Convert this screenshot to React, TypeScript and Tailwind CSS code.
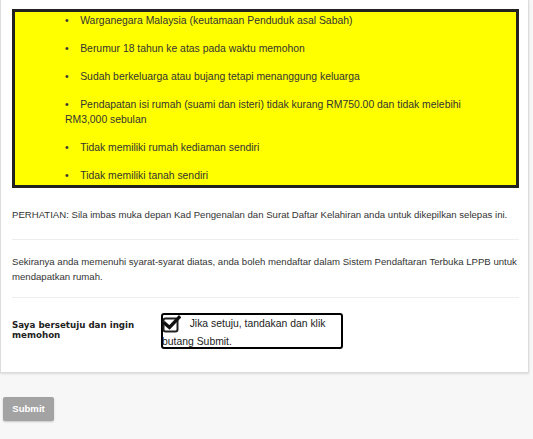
const syarat = [
  "Warganegara Malaysia (keutamaan Penduduk asal Sabah)",
  "Berumur 18 tahun ke atas pada waktu memohon",
  "Sudah berkeluarga atau bujang tetapi menanggung keluarga",
  "Pendapatan isi rumah (suami dan isteri) tidak kurang RM750.00 dan tidak melebihi",
  "Tidak memiliki rumah kediaman sendiri",
  "Tidak memiliki tanah sendiri",
];

const CheckIcon = () => (
  <svg width="19" height="18" viewBox="0 0 19 18" className="inline-block align-top">
    <rect x="1.5" y="3.5" width="14" height="13" rx="2" fill="none" stroke="#222" strokeWidth="2" />
    <path d="M3 8.5 L7.5 12.5 L17 2.5" fill="none" stroke="#111" strokeWidth="3.4" strokeLinecap="square" />
  </svg>
);

export default function App() {
  return (
    <div className="w-[533px] h-[439px] overflow-hidden bg-[#f7f7f7] text-[9.6px] text-[#333] [font-family:'Liberation_Sans',Arial,sans-serif]">
      <div className="w-[529px] bg-white border-x border-b border-[#dcdcdc] shadow-[0_1px_2px_rgba(0,0,0,0.12)] pt-[9px] pl-[11px] pr-[9px] pb-[23px]">
        {/* syarat box */}
        <div className="border-[3px] border-[#222] bg-[#ffff00] pl-[50px] pr-[8px] pt-[1px] pb-[2px] flex flex-col gap-[13px] text-[10.4px] leading-[15px]">
          {syarat.map((s, i) => (
            <p key={i}>
              •&nbsp;&nbsp;&nbsp;&nbsp;{s}
              {i === 3 && (
                <>
                  <br />
                  RM3,000 sebulan
                </>
              )}
            </p>
          ))}
        </div>

        <p className="mt-[19px] leading-[15px]">
          PERHATIAN: Sila imbas muka depan Kad Pengenalan dan Surat Daftar Kelahiran anda untuk dikepilkan selepas ini.
        </p>
        <hr className="mt-[17px] border-0 border-t border-[#eeeeee]" />

        <p className="mt-[14px] leading-[15px]">
          Sekiranya anda memenuhi syarat-syarat diatas, anda boleh mendaftar dalam Sistem Pendaftaran Terbuka LPPB untuk
          <br />
          mendapatkan rumah.
        </p>
        <hr className="mt-[13px] border-0 border-t border-[#eeeeee]" />

        <div className="mt-[15px] flex items-start">
          <div className="w-[149px] pt-[7px] font-bold text-[8.7px] leading-[10px] text-[#222] [font-family:'DejaVu_Sans',Verdana,sans-serif]">
            Saya bersetuju dan ingin
            <br />
            memohon
          </div>
          <label className="w-[182px] h-[36px] border-2 border-black rounded-[3px] text-[10.4px] leading-[17px] text-[#222]">
            <span className="-ml-[1px] block">
              <CheckIcon />
              &nbsp;&nbsp;&nbsp;Jika setuju, tandakan dan klik
              <br />
              butang Submit.
            </span>
          </label>
        </div>
      </div>

      <button className="mt-[24px] ml-[3px] w-[51px] h-[24px] rounded-[2px] bg-[#a3a3a3] text-white font-bold text-[9.6px] shadow-[0_1px_2px_rgba(0,0,0,0.2)]">
        Submit
      </button>
    </div>
  );
}
